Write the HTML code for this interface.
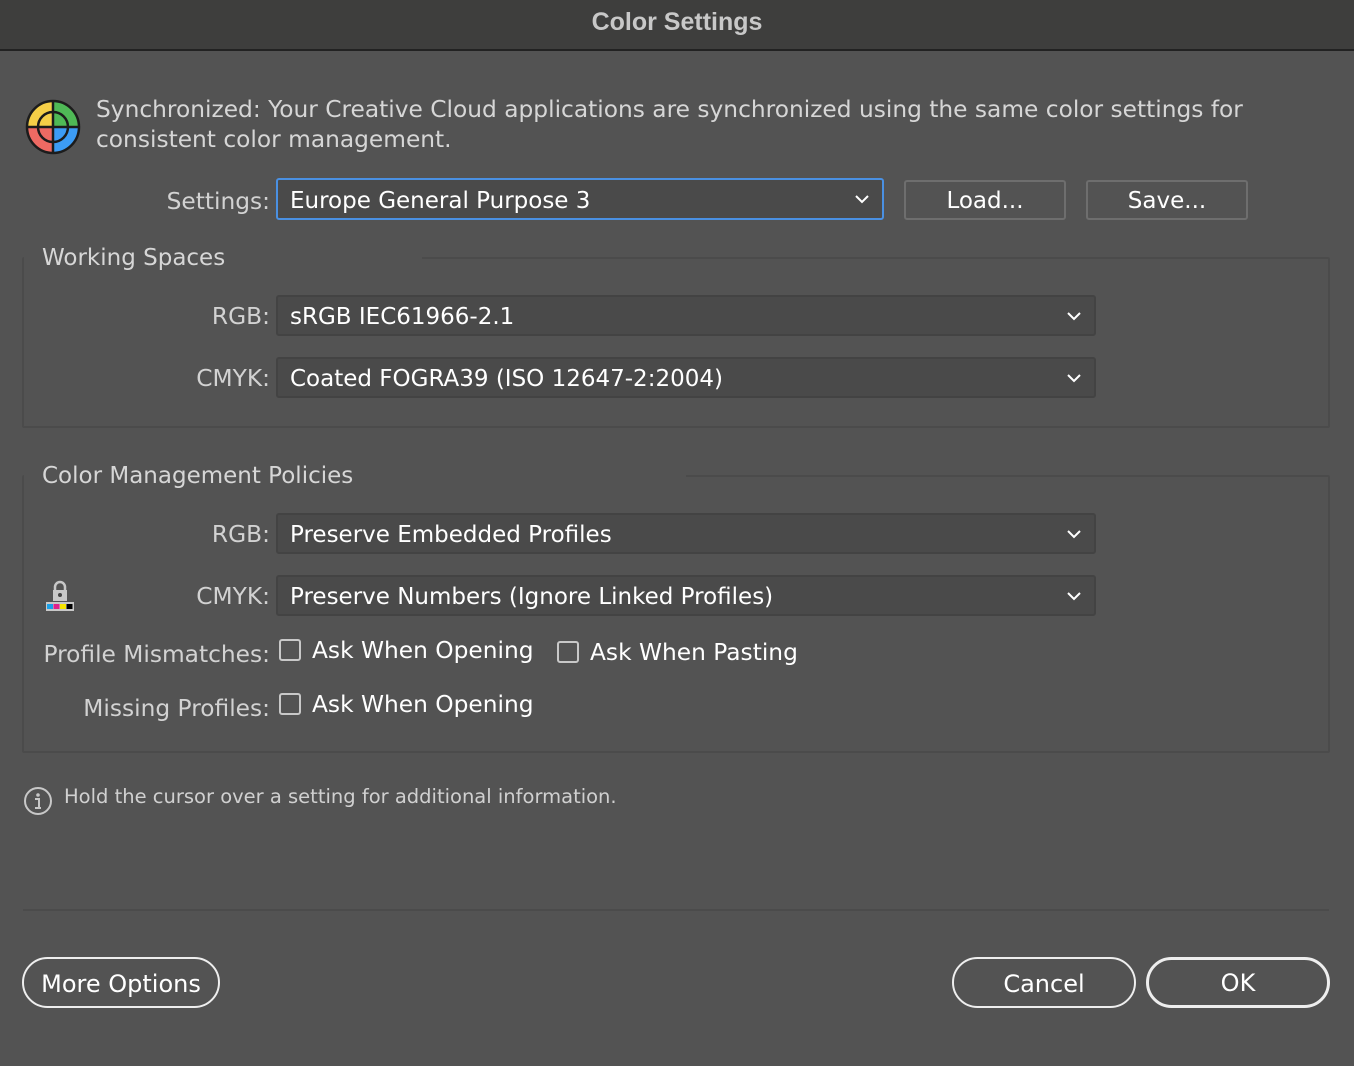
<!DOCTYPE html>
<html><head><style>
*{margin:0;padding:0;box-sizing:border-box}
body{width:1354px;height:1066px;background:#535353;font-family:"DejaVu Sans",sans-serif;color:#d6d6d6;position:relative;overflow:hidden}
.a{position:absolute;white-space:nowrap}
.title{left:0;top:0;width:1354px;height:51px;background:#3e3e3d;border-bottom:2px solid #222;text-align:center;font-family:"Liberation Sans",sans-serif;font-size:25px;font-weight:bold;line-height:44px;color:#c8c8c8}
.lbl{font-size:23.3px;color:#d2d2d2;text-align:right;line-height:42px}
.dd{background:#4a4a4a;border:2px solid #434343;border-radius:3px;color:#fff;font-size:23px;line-height:40px;padding-left:12px}
.dd svg{position:absolute;right:12px;top:14px}
.grp{border:2px solid #4b4b4b;border-radius:2px}
.gl{font-size:23px;color:#d6d6d6;background:#535353;padding:0 18px 0 18px;line-height:30px}
.btn{border:2px solid #6e6e6e;border-radius:3px;color:#fff;font-size:23px;text-align:center;line-height:38px}
.pill{border:2px solid #eee;border-radius:26px;color:#fff;font-size:24px;text-align:center;line-height:50px}
.cb{width:22px;height:22px;border:2px solid #c8c8c8;border-radius:3px}
.ct{font-size:23.3px;color:#fff;line-height:32px}
</style></head><body>
<div class="a title">Color Settings</div>

<svg class="a" style="left:25px;top:99px" width="56" height="56" viewBox="0 0 56 56">
<path d="M28 28V2A26 26 0 0 0 2 28Z" fill="#f5cf47"/><path d="M28 28V2A26 26 0 0 1 54 28Z" fill="#4fb956"/>
<path d="M28 28H2A26 26 0 0 0 28 54Z" fill="#ee6a63"/><path d="M28 28H54A26 26 0 0 1 28 54Z" fill="#3c9cf5"/>
<circle cx="28" cy="28" r="26" fill="none" stroke="#1c1c1c" stroke-width="2.5"/>
<circle cx="28" cy="28" r="15" fill="none" stroke="#1c1c1c" stroke-width="2.5"/>
<path d="M28 2V54M2 28H54" stroke="#1c1c1c" stroke-width="2.5"/></svg>
<div class="a" style="left:96px;top:95px;font-size:23.3px;line-height:30px;color:#d6d6d6">Synchronized: Your Creative Cloud applications are synchronized using the same color settings for<br>consistent color management.</div>

<div class="a lbl" style="left:60px;width:210px;top:181px">Settings:</div>
<div class="a dd" style="left:276px;top:178px;width:608px;height:42px;border-color:#4a90e2;line-height:42px">Europe General Purpose 3<svg width="16" height="10"><path d="M2 2l6 6 6-6" fill="none" stroke="#fff" stroke-width="2"/></svg></div>
<div class="a btn" style="left:904px;top:180px;width:162px;height:40px">Load...</div>
<div class="a btn" style="left:1086px;top:180px;width:162px;height:40px">Save...</div>

<div class="a grp" style="left:22px;top:257px;width:1308px;height:171px"></div>
<div class="a gl" style="left:24px;top:243px;width:398px">Working Spaces</div>
<div class="a lbl" style="left:60px;width:210px;top:296px">RGB:</div>
<div class="a dd" style="left:276px;top:295px;width:820px;height:41px">sRGB IEC61966-2.1<svg width="16" height="10"><path d="M2 2l6 6 6-6" fill="none" stroke="#fff" stroke-width="2"/></svg></div>
<div class="a lbl" style="left:60px;width:210px;top:358px">CMYK:</div>
<div class="a dd" style="left:276px;top:357px;width:820px;height:41px">Coated FOGRA39 (ISO 12647-2:2004)<svg width="16" height="10"><path d="M2 2l6 6 6-6" fill="none" stroke="#fff" stroke-width="2"/></svg></div>

<div class="a grp" style="left:22px;top:475px;width:1308px;height:278px"></div>
<div class="a gl" style="left:24px;top:461px;width:662px">Color Management Policies</div>
<div class="a lbl" style="left:60px;width:210px;top:514px">RGB:</div>
<div class="a dd" style="left:276px;top:513px;width:820px;height:41px">Preserve Embedded Profiles<svg width="16" height="10"><path d="M2 2l6 6 6-6" fill="none" stroke="#fff" stroke-width="2"/></svg></div>
<svg class="a" style="left:45px;top:579px" width="30" height="34" viewBox="0 0 30 34">
<path d="M10 11V8a5 5 0 0 1 10 0v3" fill="none" stroke="#c8c8c8" stroke-width="2.5"/>
<rect x="8" y="11" width="14" height="11" fill="#c8c8c8"/><circle cx="15" cy="16" r="2" fill="#444"/>
<rect x="1" y="23" width="28" height="9" fill="#c8c8c8"/>
<rect x="2" y="25" width="6" height="5" fill="#1aa0e8"/><rect x="8.5" y="25" width="6" height="5" fill="#e0218a"/><rect x="15" y="25" width="6" height="5" fill="#f7e600"/><rect x="21.5" y="25" width="6" height="5" fill="#000"/></svg>
<div class="a lbl" style="left:60px;width:210px;top:576px">CMYK:</div>
<div class="a dd" style="left:276px;top:575px;width:820px;height:41px">Preserve Numbers (Ignore Linked Profiles)<svg width="16" height="10"><path d="M2 2l6 6 6-6" fill="none" stroke="#fff" stroke-width="2"/></svg></div>

<div class="a lbl" style="left:10px;width:260px;top:634px">Profile Mismatches:</div>
<div class="a cb" style="left:279px;top:639px"></div>
<div class="a ct" style="left:312px;top:635px">Ask When Opening</div>
<div class="a cb" style="left:557px;top:641px"></div>
<div class="a ct" style="left:590px;top:637px">Ask When Pasting</div>
<div class="a lbl" style="left:10px;width:260px;top:688px">Missing Profiles:</div>
<div class="a cb" style="left:279px;top:693px"></div>
<div class="a ct" style="left:312px;top:689px">Ask When Opening</div>

<svg class="a" style="left:23px;top:786px" width="30" height="30"><circle cx="15" cy="15" r="13" fill="none" stroke="#c8c8c8" stroke-width="2"/><circle cx="15" cy="9" r="1.8" fill="#c8c8c8"/><path d="M12 13h4v9M12 22h6" fill="none" stroke="#c8c8c8" stroke-width="2"/></svg>
<div class="a" style="left:64px;top:785px;font-size:19.5px;color:#d0d0d0">Hold the cursor over a setting for additional information.</div>

<div class="a" style="left:23px;top:909px;width:1306px;height:2px;background:#4b4b4b"></div>
<div class="a pill" style="left:22px;top:957px;width:198px;height:51px">More Options</div>
<div class="a pill" style="left:952px;top:957px;width:184px;height:51px">Cancel</div>
<div class="a pill" style="left:1146px;top:957px;width:184px;height:51px;border-width:3px;line-height:46px">OK</div>
</body></html>
